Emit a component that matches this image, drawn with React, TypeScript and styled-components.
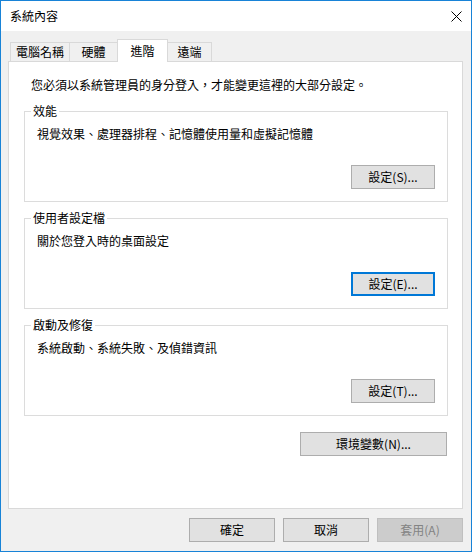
import React from "react";
import styled, { createGlobalStyle } from "styled-components";

const Global = createGlobalStyle`
  html, body { margin: 0; padding: 0; background: #ffffff; }
  body {
    font-family: "Noto Sans CJK TC", "Noto Sans", sans-serif;
    font-size: 12px;
    color: #000000;
  }
  * { box-sizing: border-box; }
`;

const Window = styled.div`
  width: 472px;
  height: 552px;
  border: 1px solid #1883d7;
  display: flex;
  flex-direction: column;
  background: #f0f0f0;
`;

const TitleBar = styled.div`
  flex: none;
  height: 30px;
  background: #ffffff;
  display: flex;
  align-items: center;
  justify-content: space-between;
  padding: 0 9px;
  line-height: 16px;
`;

const Body = styled.div`
  flex: 1;
  display: flex;
  flex-direction: column;
  padding: 8px 8px 9px 7px;
`;

const TabRow = styled.div`
  display: flex;
  align-items: flex-end;
  height: 22px;
  margin-left: 2px;
  position: relative;
  z-index: 1;
`;

const Tab = styled.div<{ $active?: boolean; $w: number }>`
  width: ${(p) => p.$w}px;
  height: ${(p) => (p.$active ? 23 : 19)}px;
  margin-bottom: ${(p) => (p.$active ? -1 : 0)}px;
  border: 1px solid #d9d9d9;
  border-bottom: none;
  background: ${(p) => (p.$active ? "#ffffff" : "#f0f0f0")};
  display: flex;
  align-items: center;
  justify-content: center;
  line-height: 16px;
  position: relative;
  z-index: ${(p) => (p.$active ? 2 : 1)};
  & + & { margin-left: -1px; }
`;

const Panel = styled.div`
  height: 448px;
  flex: none;
  border: 1px solid #d9d9d9;
  background: #ffffff;
  display: flex;
  flex-direction: column;
  padding: 15px 14px 0 15px;
`;

const Intro = styled.div`
  margin-left: 7px;
  line-height: 16px;
  margin-bottom: 2px;
`;

const GroupBox = styled.div`
  margin-top: 16px;
  border: 1px solid #dcdcdc;
  padding: 0 12px 12px;
  display: flex;
  flex-direction: column;
`;

const GroupTitle = styled.div`
  align-self: flex-start;
  margin: -9px 0 0 -6px;
  padding: 0 2px;
  background: #ffffff;
  line-height: 16px;
`;

const GroupText = styled.div`
  margin-top: 7px;
  line-height: 16px;
`;

const ButtonRow = styled.div<{ $top: number; $right?: number }>`
  display: flex;
  justify-content: flex-end;
  margin-top: ${(p) => p.$top}px;
  margin-right: ${(p) => p.$right ?? 0}px;
`;

const Button = styled.button<{ $w: number; $focused?: boolean }>`
  width: ${(p) => p.$w}px;
  height: 24px;
  padding: 0;
  margin: 0;
  font: inherit;
  font-size: 12px;
  line-height: 16px;
  color: #000000;
  background: #e1e1e1;
  border: ${(p) => (p.$focused ? "2px solid #0078d7" : "1px solid #adadad")};
  border-radius: 0;
  outline: none;
  cursor: default;
  &:disabled {
    background: #cccccc;
    border-color: #bfbfbf;
    color: #838383;
  }
`;

const Footer = styled.div`
  margin-top: 9px;
  display: flex;
  justify-content: flex-end;
  gap: 8px;
`;

const CloseIcon = () => (
  <svg width="11" height="11" viewBox="0 0 11 11" shapeRendering="crispEdges">
    <path d="M0.5 0.5 L10.5 10.5 M10.5 0.5 L0.5 10.5" stroke="#000" strokeWidth="1" fill="none" shapeRendering="geometricPrecision" />
  </svg>
);

const groups = [
  { title: "效能", text: "視覺效果、處理器排程、記憶體使用量和虛擬記憶體", button: "設定(S)...", focused: false },
  { title: "使用者設定檔", text: "關於您登入時的桌面設定", button: "設定(E)...", focused: true },
  { title: "啟動及修復", text: "系統啟動、系統失敗、及偵錯資訊", button: "設定(T)...", focused: false },
];

const tabs = [
  { label: "電腦名稱", w: 60 },
  { label: "硬體", w: 49 },
  { label: "進階", w: 51, active: true },
  { label: "遠端", w: 45 },
];

export default function App() {
  return (
    <>
      <Global />
      <Window>
        <TitleBar>
          <span>系統內容</span>
          <CloseIcon />
        </TitleBar>
        <Body>
          <TabRow>
            {tabs.map((t) => (
              <Tab key={t.label} $w={t.w} $active={t.active}>
                {t.label}
              </Tab>
            ))}
          </TabRow>
          <Panel>
            <Intro>您必須以系統管理員的身分登入，才能變更這裡的大部分設定。</Intro>
            {groups.map((g) => (
              <GroupBox key={g.title}>
                <GroupTitle>{g.title}</GroupTitle>
                <GroupText>{g.text}</GroupText>
                <ButtonRow $top={23}>
                  <Button $w={84} $focused={g.focused}>{g.button}</Button>
                </ButtonRow>
              </GroupBox>
            ))}
            <ButtonRow $top={16} $right={1}>
              <Button $w={147}>環境變數(N)...</Button>
            </ButtonRow>
          </Panel>
          <Footer>
            <Button $w={86}>確定</Button>
            <Button $w={86}>取消</Button>
            <Button $w={86} disabled>套用(A)</Button>
          </Footer>
        </Body>
      </Window>
    </>
  );
}
